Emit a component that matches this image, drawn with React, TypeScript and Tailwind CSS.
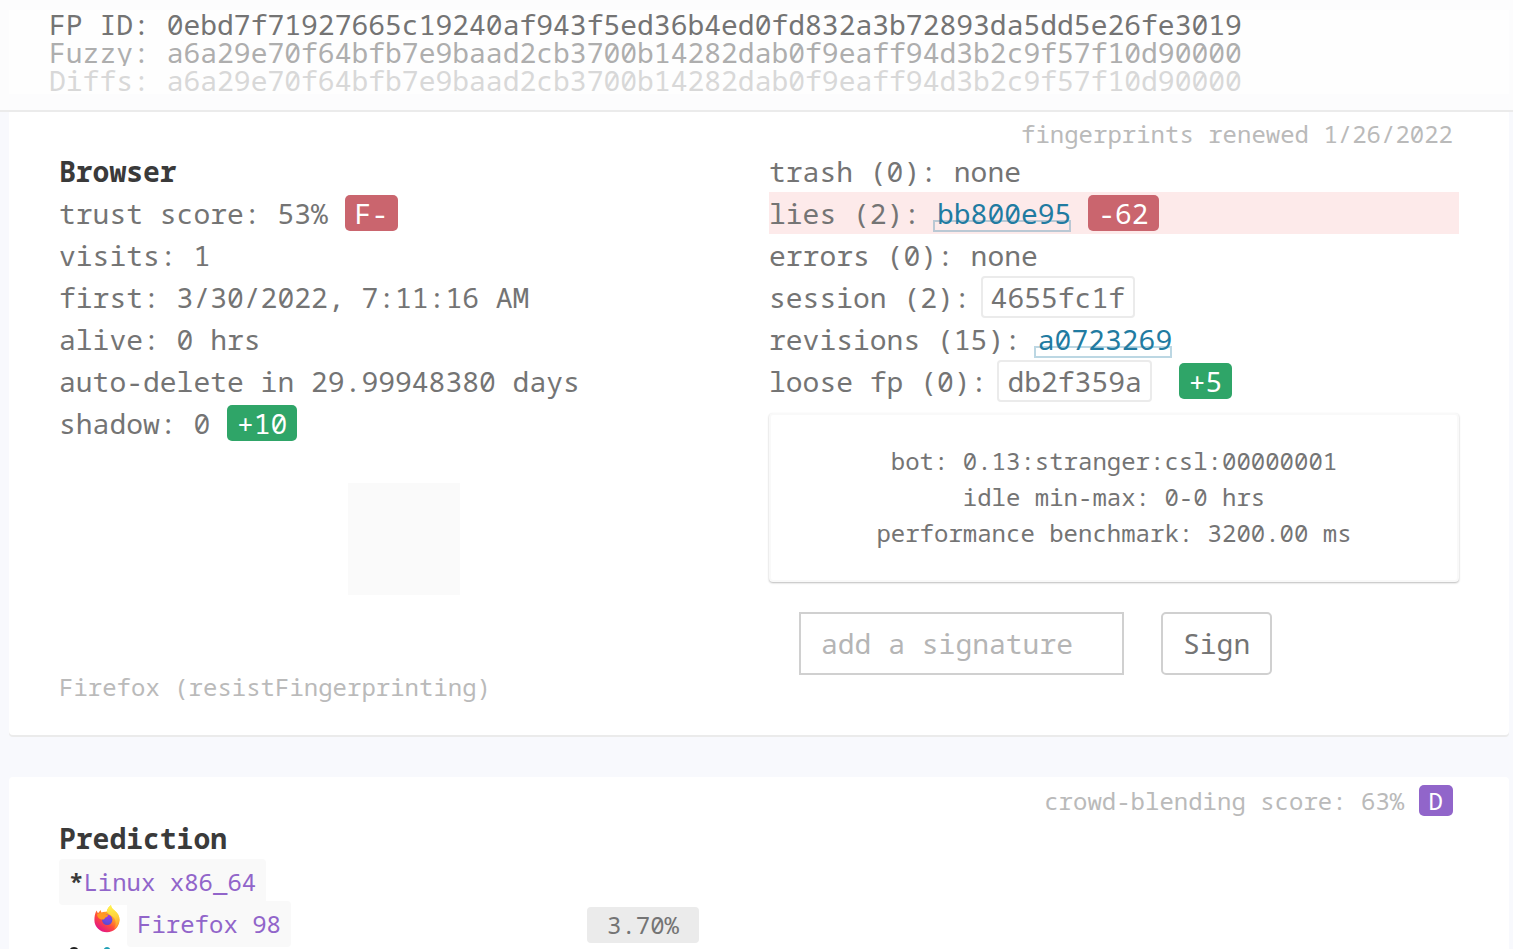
import type { ReactNode } from 'react'

type Tone = 'red' | 'green' | 'purple'

const fingerprints = [
  { label: 'FP ID', value: '0ebd7f71927665c19240af943f5ed36b4ed0fd832a3b72893da5dd5e26fe3019', color: 'text-[#747474]' },
  { label: 'Fuzzy', value: 'a6a29e70f64bfb7e9baad2cb3700b14282dab0f9eaff94d3b2c9f57f10d90000', color: 'text-[#aeaeae]' },
  { label: 'Diffs', value: 'a6a29e70f64bfb7e9baad2cb3700b14282dab0f9eaff94d3b2c9f57f10d90000', color: 'text-[#d8d8d8]' },
]

const tones: Record<Tone, string> = {
  red: 'bg-[#ca656e]',
  green: 'bg-[#2fa568]',
  purple: 'bg-[#9165ca]',
}

function Grade({ tone, small, children }: { tone: Tone; small?: boolean; children: ReactNode }) {
  return (
    <span
      className={`inline-block rounded-[5px] px-[10px] text-white ${tones[tone]} ${
        small ? 'leading-[31px]' : 'leading-[36px]'
      }`}
    >
      {children}
    </span>
  )
}

function HashLink({ children }: { children: string }) {
  return (
    <a href={`#${children}`} className="relative isolate inline-block leading-[42px] text-[#217ba1]">
      {children}
      <span className="absolute bottom-[2px] -left-1 right-0 -z-10 h-3 border-2 border-[#217ba1]/30" />
    </a>
  )
}

function Hash({ children }: { children: string }) {
  return <span className="mx-[10px] rounded-[4px] border-2 border-[#ebebeb] px-2">{children}</span>
}

function Card({ note, children }: { note: ReactNode; children: ReactNode }) {
  return (
    <section className="mr-1 ml-[9px] rounded-[4px] bg-white px-[50px] shadow-[0_2px_0_#ebebeb]">
      <div className="mr-[6px] h-10 pt-[3px] text-right text-[24px] leading-[42px] text-[#bababa]">{note}</div>
      {children}
    </section>
  )
}

function FirefoxIcon() {
  return (
    <svg viewBox="0 0 26 28" className="h-7 w-[26px]" aria-hidden="true">
      <defs>
        <linearGradient id="fx-body" x1="0.85" y1="0.1" x2="0.25" y2="0.95">
          <stop offset="0" stopColor="#fff44f" />
          <stop offset="0.35" stopColor="#ffa624" />
          <stop offset="0.65" stopColor="#ff4a3d" />
          <stop offset="1" stopColor="#e31587" />
        </linearGradient>
        <linearGradient id="fx-flame" x1="0.5" y1="0" x2="0.6" y2="1">
          <stop offset="0" stopColor="#fff44f" />
          <stop offset="0.5" stopColor="#ffd23c" />
          <stop offset="1" stopColor="#ff8a2a" />
        </linearGradient>
        <radialGradient id="fx-globe" cx="0.6" cy="0.15" r="0.9">
          <stop offset="0" stopColor="#a238e0" />
          <stop offset="0.6" stopColor="#6a4be0" />
          <stop offset="1" stopColor="#5a48c8" />
        </radialGradient>
      </defs>
      <path
        d="M2.500 5.500 4 8.200 6.600 5 7.400 7.600C9 6.700 11 6.500 12.600 6.800 13.200 4.200 14.600 1.800 17 0c.2 2.600 1.500 3.700 3 4.900C23.600 7.700 25.800 10.800 25.600 15 25.300 22 19.800 27.300 13 27.300S.4 22 .4 15.200C.4 11.500 1 8.500 2.500 5.500Z"
        fill="url(#fx-body)"
      />
      <path
        d="M17 0c.2 2.600 1.500 3.700 3 4.900 3.600 2.800 5.600 6.100 5.400 10.100-.2 4-2.500 7.200-5.400 9 2-3.200 2.400-7.200.6-10.300-1.700-3-5.600-4-8-6.900C13.200 4.200 14.600 1.800 17 0Z"
        fill="url(#fx-flame)"
      />
      <circle cx="13.200" cy="14.800" r="5.200" fill="url(#fx-globe)" />
      <path
        d="M3 9.500c1.600-1.500 4-1.900 6-1.300 1.200.4 2 1.300 3.300 1.500l1.800.2c-.2 1.600-1.600 2-2.600 2.600-1 .7-.6 1.700-1.800 1.900-1 .2-1.600-.1-2.200 0C5.300 14 3.400 12.500 3 9.500Z"
        fill="#ff9a22"
      />
    </svg>
  )
}

function TuxIcon() {
  return (
    <svg viewBox="0 0 26 28" className="h-7 w-[26px]" aria-hidden="true">
      <path d="M13 0c3.500 0 5 2.500 5 6 0 4 5 8 5 14 0 5-4 8-10 8S3 25 3 20C3 14 8 10 8 6c0-3.500 1.500-6 5-6Z" fill="#202020" />
      <path d="M13 10c3 0 5 5 5 10 0 4-2 6-5 6s-5-2-5-6c0-5 2-10 5-10Z" fill="#fff" />
      <path d="M10 7.500 13 6l3 1.500L13 10Z" fill="#f8bf11" />
    </svg>
  )
}

function EngineIcon() {
  return (
    <svg viewBox="0 0 26 28" className="h-7 w-[26px]" aria-hidden="true">
      <path d="M13 0c2 0 3 1.500 4 3.500L25 24 1 26 9 3.500C10 1.500 11 0 13 0Z" fill="#1f9fb5" />
    </svg>
  )
}

export default function App() {
  return (
    <div className="h-screen overflow-hidden bg-[#f8f9fd] font-['Noto_Sans_Mono','DejaVu_Sans_Mono',monospace] text-[28px] leading-[42px] text-[#747474]">
      <header className="relative z-10 bg-[#fcfcfd] pt-[10px] pb-4 shadow-[0_2px_0_#ebebeb]">
        <div className="mr-1 ml-[9px] bg-[#fefefe] pl-10">
          {fingerprints.map((fp) => (
            <div key={fp.label} className={`overflow-hidden leading-[28px] whitespace-nowrap ${fp.color}`}>
              {fp.label}: {fp.value}
            </div>
          ))}
        </div>
      </header>

      <main>
        <Card note="fingerprints renewed 1/26/2022">
          <div className="grid grid-cols-2 gap-5 pb-[30px]">
            <div>
              <h2 className="font-bold text-[#3a3a3a]">Browser</h2>
              <div>
                trust score: 53% <Grade tone="red">F-</Grade>
              </div>
              <div>visits: 1</div>
              <div>first: 3/30/2022, 7:11:16 AM</div>
              <div>alive: 0 hrs</div>
              <div>auto-delete in 29.99948380 days</div>
              <div>
                shadow: 0 <Grade tone="green">+10</Grade>
              </div>
              <div className="mx-auto mt-[39px] size-28 bg-[#fafafa]" />
              <div className="mt-[74px] text-[24px] leading-[36px] text-[#bababa]">Firefox (resistFingerprinting)</div>
            </div>

            <div>
              <div>trash (0): none</div>
              <div className="bg-[#fdeaea]">
                lies (2): <HashLink>bb800e95</HashLink> <Grade tone="red">-62</Grade>
              </div>
              <div>errors (0): none</div>
              <div>
                session (2):<Hash>4655fc1f</Hash>
              </div>
              <div>
                revisions (15): <HashLink>a0723269</HashLink>
              </div>
              <div>
                loose fp (0):<Hash>db2f359a</Hash> <Grade tone="green">+5</Grade>
              </div>

              <div className="mt-[11px] rounded-[4px] border-2 border-[#f9f9f9] bg-white px-7 pt-7 pb-[29px] text-center text-[24px] leading-[36px] shadow-[0_1px_2px_#bbbbbb]">
                <div>bot: 0.13:stranger:csl:00000001</div>
                <div>idle min-max: 0-0 hrs</div>
                <div>performance benchmark: 3200.00 ms</div>
              </div>

              <form className="mt-[30px] ml-[30px] flex gap-[37px]" onSubmit={(e) => e.preventDefault()}>
                <input
                  type="text"
                  aria-label="add a signature"
                  placeholder="add a signature"
                  className="h-[63px] w-[325px] border-2 border-[#d0d0d0] px-5 pb-[2px] placeholder:text-[#b5b5b5]"
                />
                <button type="submit" className="h-[63px] rounded-[5px] border-2 border-[#d0d0d0] px-5 pb-[2px]">
                  Sign
                </button>
              </form>
            </div>
          </div>
        </Card>

        <div className="mt-[42px]">
          <Card
            note={
              <>
                crowd-blending score: 63%{' '}
                <Grade tone="purple" small>
                  D
                </Grade>
              </>
            }
          >
            <h2 className="font-bold text-[#3a3a3a]">Prediction</h2>
            <div className="grid grid-cols-[528px_1fr] text-[24px]">
              <div>
                <div className="flex h-[42px]">
                  <span className="h-[46px] rounded-[4px] bg-[#f9f9f9] px-[10px] leading-[46px] text-[#9165ca]">
                    <b className="text-[#3a3a3a]">*</b>Linux x86_64
                  </span>
                </div>
                <div className="flex h-[42px] gap-[7px] pl-[35px]">
                  <div className="pt-1">
                    <FirefoxIcon />
                  </div>
                  <span className="h-[46px] rounded-[4px] bg-[#f9f9f9] px-[10px] leading-[46px] text-[#9165ca]">
                    Firefox 98
                  </span>
                </div>
                <div className="flex gap-[7px] pt-1 pl-[2px]">
                  <TuxIcon />
                  <EngineIcon />
                </div>
              </div>
              <div className="pt-[45px]">
                <span className="inline-block rounded-[4px] bg-[#ebebeb] px-5 leading-[36px]">3.70%</span>
              </div>
            </div>
          </Card>
        </div>
      </main>
    </div>
  )
}
